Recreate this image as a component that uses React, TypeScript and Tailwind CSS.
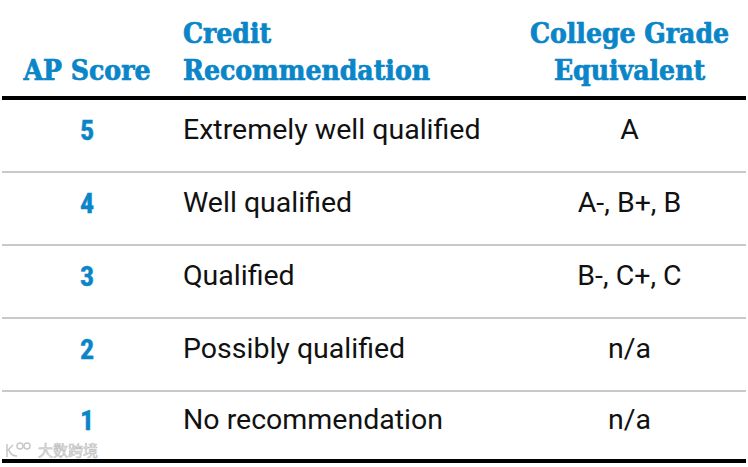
import React from 'react';

const rows = [
  { score: '5', rec: 'Extremely well qualified', grade: 'A' },
  { score: '4', rec: 'Well qualified', grade: 'A-, B+, B' },
  { score: '3', rec: 'Qualified', grade: 'B-, C+, C' },
  { score: '2', rec: 'Possibly qualified', grade: 'n/a' },
  { score: '1', rec: 'No recommendation', grade: 'n/a' },
];

export default function App() {
  return (
    <div className="w-[748px] h-[467px] bg-white overflow-hidden relative">
      <div className="mx-[2px] w-[744px]">
        {/* Header */}
        <div className="grid grid-cols-[170px_341px_1fr] h-[100px] items-end pb-[7px] border-b-4 border-black text-[#0a86c8] font-bold text-[28px] leading-[37px] [font-family:'DejaVu_Serif_Condensed','DejaVu_Serif',serif] [font-stretch:condensed] [-webkit-text-stroke:0.7px_#0a86c8]">
          <div className="text-center">AP Score</div>
          <div className="pl-[11px]">
            Credit
            <br />
            Recommendation
          </div>
          <div className="text-center">
            College Grade
            <br />
            Equivalent
          </div>
        </div>

        {/* Rows */}
        {rows.map((r, i) => (
          <div
            key={r.score}
            className={
              'grid grid-cols-[170px_341px_1fr] items-center pb-[10px] ' +
              (i === rows.length - 1
                ? 'h-[71px] border-b-4 border-black'
                : 'h-[73px] border-b-2 border-[#c9c9c9]')
            }
          >
            <div className="text-center text-[#0a86c8] font-bold text-[28px] [font-family:'Roboto_Condensed',Roboto,sans-serif] [-webkit-text-stroke:0.4px_#0a86c8]">
              {r.score}
            </div>
            <div className="pl-[11px] text-[28.5px] text-[#111] [font-family:Roboto,sans-serif]">
              {r.rec}
            </div>
            <div className="text-center text-[28.5px] text-[#111] [font-family:Roboto,sans-serif]">
              {r.grade}
            </div>
          </div>
        ))}
      </div>

      {/* Watermark */}
      <div className="absolute left-[5px] top-[441px] flex items-center gap-[5px]">
        <svg width="28" height="17" viewBox="0 0 28 17" fill="none" stroke="#c8c8c8" strokeWidth="1.5">
          <path d="M2 3v13M2 10l6-6M4 9c1 4 4 6 8 6" />
          <circle cx="15" cy="5" r="3" />
          <circle cx="22" cy="5" r="3" />
        </svg>
        <span className="text-[15px] leading-none text-[#eeeeee] [font-family:'Noto_Sans_CJK_SC',sans-serif] [-webkit-text-stroke:0.6px_#bdbdbd]">
          大数跨境
        </span>
      </div>
    </div>
  );
}
